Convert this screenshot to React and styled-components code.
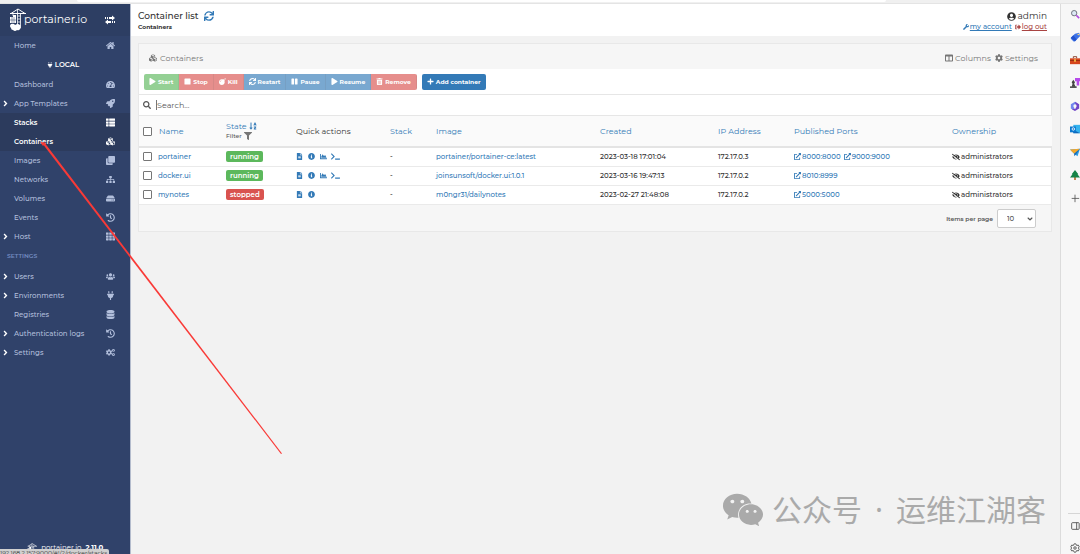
import { useState } from "react";
import styled, { createGlobalStyle } from "styled-components";
import {
	FaAngleRight,
	FaBomb,
	FaChartArea,
	FaClone,
	FaCog,
	FaCogs,
	FaColumns,
	FaCubes,
	FaDatabase,
	FaExternalLinkAlt,
	FaEyeSlash,
	FaFileAlt,
	FaFilter,
	FaHdd,
	FaHistory,
	FaHome,
	FaInfoCircle,
	FaPause,
	FaPlay,
	FaPlug,
	FaPlus,
	FaRocket,
	FaSearch,
	FaSignOutAlt,
	FaSitemap,
	FaSortAlphaDown,
	FaStop,
	FaSync,
	FaTachometerAlt,
	FaTerminal,
	FaTh,
	FaThList,
	FaTrashAlt,
	FaUserCircle,
	FaUsers,
	FaWeixin,
	FaWrench,
} from "react-icons/fa";

const GlobalStyle = createGlobalStyle`
	* {
		box-sizing: border-box;
	}

	body {
		margin: 0;
		background-color: #f2f2f2;
		color: #333;
		font-family: Montserrat, Inter, "Noto Sans CJK SC", sans-serif;
		font-size: 7px;
		line-height: 10px;
	}

	a {
		color: #337ab7;
		text-decoration: none;
	}

	button,
	input,
	select {
		font-family: inherit;
		color: inherit;
	}

	svg {
		flex-shrink: 0;
	}
`;

const Browser = styled.div`
	display: flex;
	flex-direction: column;
	height: 100vh;
	overflow: hidden;
	position: relative;
`;

const AddressStrip = styled.div`
	flex: 0 0 4px;
	background-color: #f0f0f0;
	border-bottom: 1px solid #e4e4e4;
	padding: 0 194px 0 77px;

	&::before {
		content: "";
		display: block;
		height: 2px;
		background-color: #fff;
		border-radius: 0 0 4px 4px;
	}
`;

const Body = styled.div`
	flex: 1;
	display: flex;
	min-height: 0;
`;

const Sidebar = styled.nav`
	flex: 0 0 131px;
	display: flex;
	flex-direction: column;
	background-color: #30426a;
	border-right: 1px solid #b4bccd;
	overflow: hidden;
`;

const SidebarHeader = styled.div`
	display: flex;
	align-items: center;
	justify-content: space-between;
	height: 32px;
	padding: 0 15px 0 9px;
	background-color: #2d3e63;
	color: #fff;
`;

const Brand = styled.a`
	display: flex;
	align-items: center;
	color: #fff;
	font-size: 11px;
	line-height: 16px;

	span {
		margin-bottom: 3px;
		margin-left: -3px;
	}
`;

const ToggleButton = styled.button`
	display: flex;
	padding: 0;
	border: none;
	background: none;
	color: #fff;
`;

const Menu = styled.ul`
	list-style: none;
	margin: 0;
	padding: 0;
`;

const MenuLink = styled.a`
	display: flex;
	align-items: center;
	height: 19px;
	padding: 0 15px 0 1px;
	font-size: 7px;
	color: ${({ $active }) => ($active ? "#fff" : "#b2bfdc")};
	font-weight: ${({ $active }) => ($active ? 600 : 500)};
	background-color: ${({ $active }) => ($active ? "#2c3b5d" : "transparent")};
`;

const Chevron = styled.span`
	display: flex;
	flex: 0 0 13px;
	color: #fff;
	font-size: 9px;
`;

const MenuIcon = styled.span`
	display: flex;
	justify-content: center;
	flex: 0 0 10px;
	margin-left: auto;
	font-size: 9px;
`;

const EndpointName = styled.li`
	display: flex;
	align-items: center;
	justify-content: center;
	gap: 2px;
	height: 20px;
	padding-right: 4px;
	color: #fff;
	font-size: 7px;
	font-weight: 600;
`;

const MenuTitle = styled.li`
	height: 21px;
	padding-left: 7px;
	color: #738bc0;
	font-size: 6px;
	font-weight: 600;
	line-height: 21px;
`;

const SidebarFooter = styled.div`
	display: flex;
	justify-content: center;
	gap: 4px;
	height: 11px;
	margin-top: auto;
	color: #fff;
	font-size: 7px;
	overflow: hidden;
`;

const StatusBar = styled.div`
	position: absolute;
	left: 0;
	bottom: 0;
	width: 109px;
	height: 5px;
	background-color: #d0d0d0;
	border-top-right-radius: 2px;
	color: #333;
	font-size: 6px;
	line-height: 8px;
	overflow: hidden;
	white-space: nowrap;
`;

const Page = styled.main`
	flex: 1;
	min-width: 0;
	border-right: 1px solid #dcdcdc;
`;

const PageHeader = styled.header`
	display: flex;
	justify-content: space-between;
	height: 32px;
	padding: 6px 13px 0 7px;
	background-color: #fff;
`;

const PageTitle = styled.h1`
	display: flex;
	align-items: center;
	gap: 5px;
	margin: 0;
	font-size: 9px;
	line-height: 12px;
	font-weight: 500;

	svg {
		font-size: 10px;
		color: #337ab7;
	}
`;

const Crumb = styled.div`
	font-size: 6px;
	font-weight: 700;
`;

const UserBox = styled.div`
	display: flex;
	flex-direction: column;
	align-items: flex-end;
`;

const UserName = styled.div`
	display: flex;
	align-items: center;
	gap: 2px;
	font-size: 9px;
	line-height: 12px;
`;

const UserLinks = styled.div`
	display: flex;
	gap: 3px;
`;

const UserLink = styled.a`
	display: flex;
	align-items: center;
	gap: 1px;
	color: ${({ $danger }) => ($danger ? "#a94442" : "#337ab7")};
	font-weight: 500;
	text-decoration: underline;

	svg {
		font-size: 6px;
	}
`;

const Panel = styled.section`
	margin: 7px 8px 0 7px;
	border: 1px solid #e8e8e8;
	background-color: #fff;
`;

const PanelHeader = styled.div`
	display: flex;
	align-items: center;
	justify-content: space-between;
	height: 25px;
	padding: 3px 13px 0 10px;
	background-color: #f6f6f6;
	color: #767676;
	font-size: 8px;
`;

const PanelTitle = styled.h2`
	display: flex;
	align-items: center;
	gap: 3px;
	margin: 0;
	font-size: 8px;
	font-weight: 400;
`;

const PanelTools = styled.div`
	display: flex;
	gap: 4px;
`;

const ToolButton = styled.button`
	display: flex;
	align-items: center;
	gap: 2px;
	padding: 0;
	border: none;
	background: none;
	font-size: 8px;
`;

const ActionBar = styled.div`
	display: flex;
	align-items: center;
	gap: 5px;
	height: 26px;
	padding: 0 5px;
	border-bottom: 1px solid #e6e6e6;
`;

const ButtonGroup = styled.div`
	display: flex;
	border-radius: 2px;
	overflow: hidden;
	opacity: 0.65;
`;

const tones = {
	success: "#5cb85c",
	danger: "#d9534f",
	primary: "#337ab7",
};

const ActionButton = styled.button`
	display: flex;
	align-items: center;
	gap: 2px;
	height: 16px;
	padding: 0 5px;
	border: none;
	border-right: ${({ $single }) => ($single ? "none" : "1px solid rgba(0, 0, 0, 0.1)")};
	border-radius: ${({ $single }) => ($single ? "2px" : "0")};
	background-color: ${({ $tone }) => tones[$tone]};
	color: #fff;
	font-size: 6px;
	font-weight: 700;

	svg {
		font-size: 7px;
	}
`;

const SearchBar = styled.label`
	display: flex;
	align-items: center;
	gap: 5px;
	height: 21px;
	padding: 0 4px;
	border-bottom: 1px solid #e6e6e6;
	color: #555;
	font-size: 8px;
`;

const SearchInput = styled.input`
	flex: 1;
	padding: 0;
	border: none;
	outline: none;
	background: none;
	font-size: 8px;

	&::placeholder {
		color: #555;
	}

	&:placeholder-shown {
		border-left: 1px solid #777;
	}
`;

const Table = styled.table`
	width: 100%;
	table-layout: fixed;
	border-collapse: collapse;
`;

const HeadCell = styled.th`
	height: 31px;
	padding: 0 4px;
	background-color: #fafafa;
	border-bottom: 2px solid #e4e4e4;
	color: ${({ $plain }) => ($plain ? "#333" : "#337ab7")};
	font-size: 8px;
	font-weight: 400;
	text-align: left;
	white-space: nowrap;
`;

const Cell = styled.td`
	height: 19px;
	padding: 0 4px;
	border-bottom: 1px solid #eaeaea;
	font-weight: 500;
	white-space: nowrap;
`;

const Inline = styled.span`
	display: flex;
	align-items: center;
	gap: ${({ $gap }) => $gap}px;
`;

const FilterLabel = styled(Inline)`
	color: #555;
	font-size: 6px;
	font-weight: 500;

	svg {
		font-size: 8px;
		color: #777;
	}
`;

const Checkbox = styled.input`
	appearance: none;
	width: 9px;
	height: 9px;
	margin: 0;
	border: 1px solid #767676;
	border-radius: 1px;
	background-color: #fff;

	&:checked {
		background-color: #337ab7;
	}
`;

const Badge = styled.span`
	display: inline-block;
	padding: 0 4px;
	border-radius: 2px;
	background-color: ${({ $stopped }) => ($stopped ? "#d9534f" : "#5cb85c")};
	color: #fff;
	font-weight: 600;
	line-height: 11px;
`;

const IconLink = styled.a`
	display: flex;
	justify-content: center;
	width: 7px;
`;

const PanelFooter = styled.div`
	display: flex;
	align-items: center;
	justify-content: flex-end;
	height: 26px;
	padding: 2px 15px 0 0;
	background-color: #f6f6f6;
`;

const PageSize = styled.label`
	display: flex;
	align-items: center;
	gap: 4px;
	color: #555;
	font-size: 6px;
	font-weight: 600;
`;

const SelectBox = styled.span`
	display: grid;
	align-items: center;
	width: 39px;

	select,
	svg {
		grid-area: 1 / 1;
	}

	select {
		appearance: none;
		height: 19px;
		padding: 0 9px;
		border: 1px solid #ccc;
		border-radius: 2px;
		background-color: #fff;
		font-size: 7px;
		font-weight: 500;
	}

	svg {
		justify-self: end;
		margin-right: 2px;
		transform: rotate(90deg);
		font-size: 8px;
		pointer-events: none;
	}
`;

const EdgeRail = styled.aside`
	flex: 0 0 19px;
	display: flex;
	flex-direction: column;
	align-items: flex-end;
	background-color: #f7f7f7;
	padding: 5px 0 1px;
	overflow: hidden;
`;

const RailButton = styled.button`
	display: flex;
	width: 10px;
	height: 10px;
	margin-bottom: 13px;
	padding: 0;
	border: none;
	background: none;
`;

const RailBottom = styled.div`
	display: flex;
	flex-direction: column;
	align-items: flex-end;
	gap: 12px;
	width: 12px;
	margin-top: auto;
	padding-top: 7px;
	border-top: 1px solid #d6d6d6;

	${RailButton} {
		margin-bottom: 0;
	}
`;

const Pointer = styled.svg`
	position: absolute;
	left: 0;
	top: 0;
	pointer-events: none;
`;

const Watermark = styled.div`
	position: absolute;
	right: 34px;
	bottom: 23px;
	display: flex;
	align-items: center;
	gap: 13px;
	color: #aaa;
	font-family: "Noto Sans", "Noto Sans CJK SC", sans-serif;
	font-size: 30px;
	line-height: 42px;
	white-space: nowrap;
	pointer-events: none;

	svg {
		margin-right: -5px;
	}
`;

const localMenu = [
	{ name: "Dashboard", icon: FaTachometerAlt },
	{ name: "App Templates", icon: FaRocket, expand: true },
	{ name: "Stacks", icon: FaThList, active: true },
	{ name: "Containers", icon: FaCubes, active: true },
	{ name: "Images", icon: FaClone },
	{ name: "Networks", icon: FaSitemap },
	{ name: "Volumes", icon: FaHdd },
	{ name: "Events", icon: FaHistory },
	{ name: "Host", icon: FaTh, expand: true },
];

const settingsMenu = [
	{ name: "Users", icon: FaUsers, expand: true },
	{ name: "Environments", icon: FaPlug, expand: true },
	{ name: "Registries", icon: FaDatabase },
	{ name: "Authentication logs", icon: FaHistory, expand: true },
	{ name: "Settings", icon: FaCogs, expand: true },
];

const actions = [
	{ name: "Start", icon: FaPlay, tone: "success" },
	{ name: "Stop", icon: FaStop, tone: "danger" },
	{ name: "Kill", icon: FaBomb, tone: "danger" },
	{ name: "Restart", icon: FaSync, tone: "primary" },
	{ name: "Pause", icon: FaPause, tone: "primary" },
	{ name: "Resume", icon: FaPlay, tone: "primary" },
	{ name: "Remove", icon: FaTrashAlt, tone: "danger" },
];

const columnWidths = [83, 70, 94, 46, 164, 118, 76, 158, 104];

const containers = [
	{
		name: "portainer",
		state: "running",
		image: "portainer/portainer-ce:latest",
		created: "2023-03-18 17:01:04",
		ip: "172.17.0.3",
		ports: ["8000:8000", "9000:9000"],
	},
	{
		name: "docker.ui",
		state: "running",
		image: "joinsunsoft/docker.ui:1.0.1",
		created: "2023-03-16 19:47:13",
		ip: "172.17.0.2",
		ports: ["8010:8999"],
	},
	{
		name: "mynotes",
		state: "stopped",
		image: "m0ngr31/dailynotes",
		created: "2023-02-27 21:48:08",
		ip: "172.17.0.2",
		ports: ["5000:5000"],
	},
];

const CraneLogo = ({ size = 24 }) => (
	<svg width={(size * 18) / 24} height={size} viewBox="0 0 18 24" fill="none" stroke="#fff">
		<path d="M1 5.5H17M2 5.5L9 1L16 5.5" strokeWidth="1" />
		<path d="M8.5 1V18M11.5 5V18M8.5 8h3M8.5 11h3M8.5 14h3" strokeWidth="0.8" />
		<path d="M4 5v3" strokeWidth="0.7" />
		<path d="M4 7h3v8H1V9h3z" fill="#fff" stroke="none" />
		<path d="M3 9v6M5 9v6M1 12h6" stroke="#2d3e63" strokeWidth="0.5" />
		<path
			d="M2 16q3-1 4 1q3-2 5 0q2 2 0 4q-1 2-3 1q-2 2-4 0q-2 0-2-2q-2-2 0-4z"
			fill="#fff"
			stroke="none"
		/>
	</svg>
);

const SwapIcon = () => (
	<svg width="10" height="10" viewBox="0 0 10 10" fill="#fff">
		<path d="M0 2h1v2H0zM2 2h1v2H2zM4 2h3V0.5L10 3 7 5.5V4H4z" />
		<path d="M10 6H9v2h1zM8 6H7v2h1zM6 6H3V4.5L0 7l3 2.5V8h3z" />
	</svg>
);

const railIcons = [
	{
		name: "Search",
		art: (
			<>
				<circle cx="5" cy="5" r="3.2" fill="#dce9f5" stroke="#707580" strokeWidth="1.2" />
				<path d="M7.5 7.5L11 11" stroke="#b14be0" strokeWidth="2" />
			</>
		),
	},
	{
		name: "Shopping",
		art: (
			<>
				<path d="M1 7L6 2l5-1 1 4-6 6q-1 1-2 0L1 8z" fill="#3d73e8" />
				<path d="M1 7l5 4 2-2-4-5z" fill="#2453cc" />
				<circle cx="10" cy="3" r="1" fill="#ffd75e" />
			</>
		),
	},
	{
		name: "Tools",
		art: (
			<>
				<path d="M4 4V2h4v2" stroke="#7c2b12" fill="none" />
				<path d="M0 4h12v7H0z" fill="#d5461d" />
				<path d="M0 6h12v1H0z" fill="#8d2b0e" />
				<path d="M5 5h2v3H5z" fill="#fac64b" />
			</>
		),
	},
	{
		name: "Games",
		art: (
			<>
				<path d="M2 11l1-4-1-2 2-3 2 3-1 2 2 4z" fill="#444" />
				<path d="M0 10h8v2H0z" fill="#555" />
				<path d="M6 0h6v4h-1v5H8V4H6z" fill="#b64bea" />
			</>
		),
	},
	{
		name: "Microsoft 365",
		art: (
			<>
				<path d="M6 1L1 4v5l4 2V7l4-2V3z" fill="#7187ed" />
				<path d="M6 1l5 3v5l-5 3-4-2 5-1V5z" fill="#7045c7" />
				<circle cx="6" cy="6" r="2" fill="#f7f7f7" />
			</>
		),
	},
	{
		name: "Outlook",
		art: (
			<>
				<path d="M4 1h8v10H4z" fill="#35b3ee" />
				<path d="M4 7l8 4H4z" fill="#1266b9" />
				<path d="M0 3h7v7H0z" fill="#0c78cf" />
				<circle cx="4" cy="6" r="1.5" fill="none" stroke="#fff" />
			</>
		),
	},
	{
		name: "Drop",
		art: (
			<>
				<path d="M0 3l12-1-3 9-4-3z" fill="#2c9de4" />
				<path d="M0 3l12-1-7 6z" fill="#f5a72a" />
				<path d="M5 8l7-6-5 7-2 2z" fill="#1769b8" />
			</>
		),
	},
	{
		name: "Games tree",
		art: (
			<>
				<path d="M5 8h2v4H5z" fill="#b66a2c" />
				<path d="M6 0l4 5h-1l3 4H0l3-4H2z" fill="#158347" />
			</>
		),
	},
	{ name: "Add", art: <path d="M6 2v9M2 6.5h9" stroke="#555" strokeWidth="1" /> },
];

const MenuItem = ({ item }) => {
	const Icon = item.icon;
	return (
		<li>
			<MenuLink href="#" $active={item.active}>
				<Chevron>{item.expand && <FaAngleRight />}</Chevron>
				{item.name}
				<MenuIcon>
					<Icon />
				</MenuIcon>
			</MenuLink>
		</li>
	);
};

const ContainerRow = ({ container, checked, onToggle }) => {
	const running = container.state === "running";
	return (
		<tr>
			<Cell>
				<Inline $gap={6}>
					<Checkbox
						type="checkbox"
						aria-label={container.name}
						checked={checked}
						onChange={onToggle}
					/>
					<a href="#">{container.name}</a>
				</Inline>
			</Cell>
			<Cell>
				<Badge $stopped={!running}>{container.state}</Badge>
			</Cell>
			<Cell>
				<Inline $gap={5}>
					<IconLink href="#" aria-label="Logs">
						<FaFileAlt />
					</IconLink>
					<IconLink href="#" aria-label="Inspect">
						<FaInfoCircle />
					</IconLink>
					{running && (
						<>
							<IconLink href="#" aria-label="Stats">
								<FaChartArea />
							</IconLink>
							<IconLink href="#" aria-label="Console">
								<FaTerminal size={9} />
							</IconLink>
						</>
					)}
				</Inline>
			</Cell>
			<Cell>-</Cell>
			<Cell>
				<a href="#">{container.image}</a>
			</Cell>
			<Cell>{container.created}</Cell>
			<Cell>{container.ip}</Cell>
			<Cell>
				<Inline $gap={3}>
					{container.ports.map((port) => (
						<a href="#" key={port}>
							<Inline $gap={1}>
								<FaExternalLinkAlt />
								{port}
							</Inline>
						</a>
					))}
				</Inline>
			</Cell>
			<Cell>
				<Inline $gap={1}>
					<FaEyeSlash size={8} />
					administrators
				</Inline>
			</Cell>
		</tr>
	);
};

export default function App() {
	const [search, setSearch] = useState("");
	const [selected, setSelected] = useState([]);

	const toggle = (name) => {
		setSelected(
			selected.includes(name) ? selected.filter((n) => n !== name) : [...selected, name]
		);
	};

	const toggleAll = () => {
		setSelected(selected.length === containers.length ? [] : containers.map((c) => c.name));
	};

	return (
		<>
			<GlobalStyle />
			<Browser>
				<AddressStrip />
				<Body>
					<Sidebar>
						<SidebarHeader>
							<Brand href="#">
								<CraneLogo />
								<span>portainer.io</span>
							</Brand>
							<ToggleButton aria-label="Toggle sidebar">
								<SwapIcon />
							</ToggleButton>
						</SidebarHeader>
						<Menu>
							<MenuItem item={{ name: "Home", icon: FaHome }} />
							<EndpointName>
								<FaPlug size={6} />
								LOCAL
							</EndpointName>
							{localMenu.map((item) => (
								<MenuItem key={item.name} item={item} />
							))}
							<MenuTitle>SETTINGS</MenuTitle>
							{settingsMenu.map((item) => (
								<MenuItem key={item.name} item={item} />
							))}
						</Menu>
						<SidebarFooter>
							<CraneLogo size={14} />
							<span>portainer.io</span>
							<b>2.11.0</b>
						</SidebarFooter>
					</Sidebar>

					<Page>
						<PageHeader>
							<div>
								<PageTitle>
									Container list
									<FaSync />
								</PageTitle>
								<Crumb>Containers</Crumb>
							</div>
							<UserBox>
								<UserName>
									<FaUserCircle />
									admin
								</UserName>
								<UserLinks>
									<UserLink href="#">
										<FaWrench />
										my account
									</UserLink>
									<UserLink href="#" $danger>
										<FaSignOutAlt />
										log out
									</UserLink>
								</UserLinks>
							</UserBox>
						</PageHeader>

						<Panel>
							<PanelHeader>
								<PanelTitle>
									<FaCubes />
									Containers
								</PanelTitle>
								<PanelTools>
									<ToolButton>
										<FaColumns />
										Columns
									</ToolButton>
									<ToolButton>
										<FaCog />
										Settings
									</ToolButton>
								</PanelTools>
							</PanelHeader>

							<ActionBar>
								<ButtonGroup>
									{actions.map(({ name, icon: Icon, tone }) => (
										<ActionButton key={name} $tone={tone} disabled>
											<Icon />
											{name}
										</ActionButton>
									))}
								</ButtonGroup>
								<ActionButton $tone="primary" $single>
									<FaPlus />
									Add container
								</ActionButton>
							</ActionBar>

							<SearchBar>
								<FaSearch />
								<SearchInput
									aria-label="Search"
									placeholder="Search..."
									value={search}
									onChange={(e) => setSearch(e.target.value)}
								/>
							</SearchBar>

							<Table>
								<colgroup>
									{columnWidths.map((width, i) => (
										<col key={i} width={width} />
									))}
								</colgroup>
								<thead>
									<tr>
										<HeadCell>
											<Inline $gap={7}>
												<Checkbox
													type="checkbox"
													aria-label="Select all"
													checked={selected.length === containers.length}
													onChange={toggleAll}
												/>
												Name
											</Inline>
										</HeadCell>
										<HeadCell>
											<Inline $gap={2}>
												State
												<FaSortAlphaDown />
											</Inline>
											<FilterLabel $gap={2}>
												Filter
												<FaFilter />
											</FilterLabel>
										</HeadCell>
										<HeadCell $plain>Quick actions</HeadCell>
										<HeadCell>Stack</HeadCell>
										<HeadCell>Image</HeadCell>
										<HeadCell>Created</HeadCell>
										<HeadCell>IP Address</HeadCell>
										<HeadCell>Published Ports</HeadCell>
										<HeadCell>Ownership</HeadCell>
									</tr>
								</thead>
								<tbody>
									{containers
										.filter((c) => c.name.includes(search))
										.map((c) => (
											<ContainerRow
												key={c.name}
												container={c}
												checked={selected.includes(c.name)}
												onToggle={() => toggle(c.name)}
											/>
										))}
								</tbody>
							</Table>

							<PanelFooter>
								<PageSize>
									Items per page
									<SelectBox>
										<select defaultValue="10">
											<option>10</option>
											<option>25</option>
											<option>50</option>
										</select>
										<FaAngleRight />
									</SelectBox>
								</PageSize>
							</PanelFooter>
						</Panel>
					</Page>

					<EdgeRail>
						{railIcons.map(({ name, art }) => (
							<RailButton key={name} aria-label={name}>
								<svg width="10" height="10" viewBox="0 0 12 12">
									{art}
								</svg>
							</RailButton>
						))}
						<RailBottom>
							<RailButton aria-label="Hide sidebar">
								<svg width="10" height="10" viewBox="0 0 12 12" fill="none" stroke="#444">
									<rect x="2" y="2" width="9" height="8" rx="1" />
									<path d="M8 2v8" />
								</svg>
							</RailButton>
							<RailButton aria-label="Sidebar settings">
								<svg width="10" height="10" viewBox="0 0 12 12" fill="none" stroke="#444">
									<path d="M5 1h2l1 2 2-.5 1 2L10 6l1 1.5-1 2L8 9l-1 2H5L4 9l-2 .5-1-2L2 6 1 4.5l1-2L4 3z" />
									<circle cx="6" cy="6" r="1.5" />
								</svg>
							</RailButton>
						</RailBottom>
					</EdgeRail>
				</Body>

				<StatusBar>192.168.2.157:9000/#!/2/docker/stacks</StatusBar>
				<Pointer width="290" height="460">
					<path d="M42 143L281 454L282 453.5L44 142z" fill="#f93a37" />
					<path d="M40 142l6 1-3 3z" fill="#f93a37" />
				</Pointer>
				<Watermark>
					<FaWeixin size={42} />
					<span>公众号</span>
					<span>·</span>
					<span>运维江湖客</span>
				</Watermark>
			</Browser>
		</>
	);
}
